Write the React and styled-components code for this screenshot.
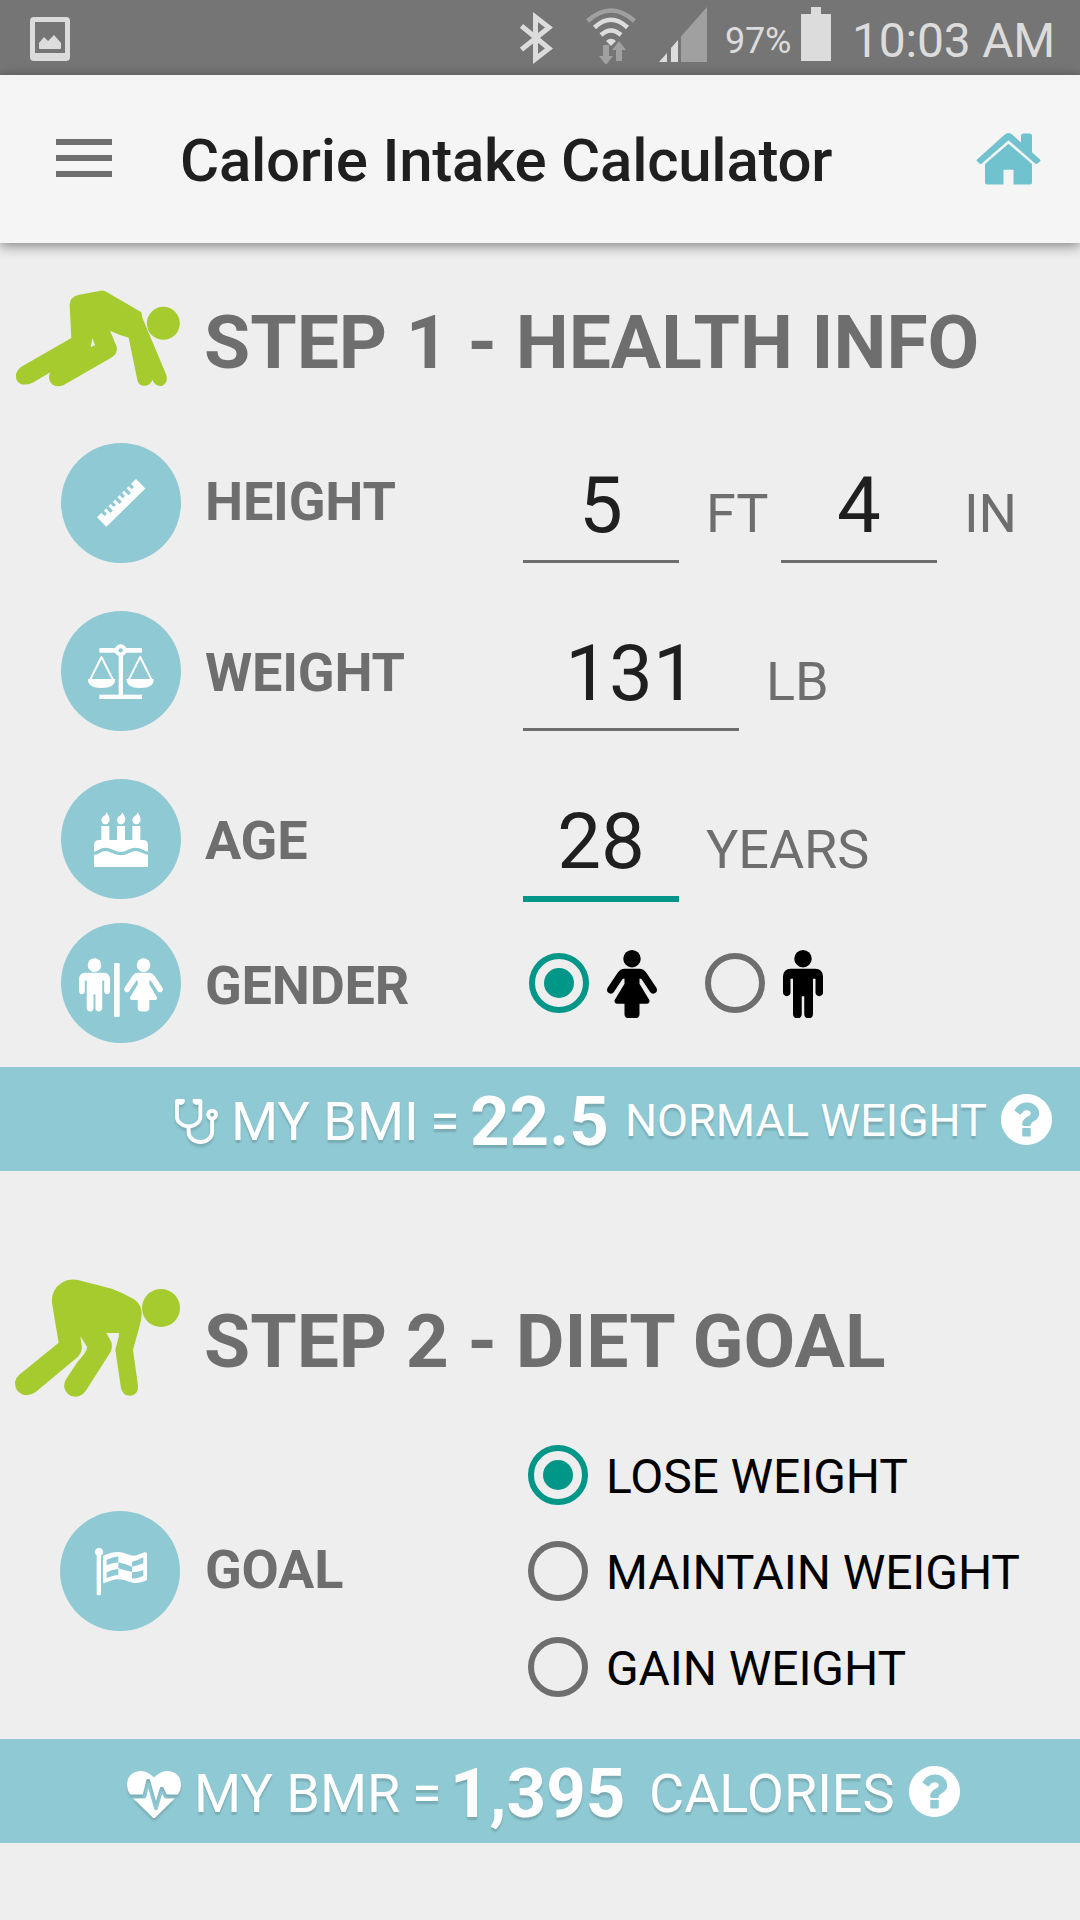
import React, { useState } from "react";
import styled, { createGlobalStyle } from "styled-components";

const c = {
  bg: "#eeeeee",
  band: "#8fcad4",
  teal: "#009688",
  gray: "#6e6e6e",
  lime: "#a5cb2e",
  ink: "#1f1f1f",
  status: "#dcdcdc",
  dim: "#a0a0a0",
};

const GlobalStyle = createGlobalStyle`
  * { box-sizing: border-box; }
  body { margin: 0; background: ${c.bg}; font-family: Roboto, "Liberation Sans", sans-serif; }
  svg { display: block; flex: none; }
`;

const Screen = styled.div`
  width: 1080px;
  height: 1920px;
  overflow: hidden;
  background: ${c.bg};
  display: flex;
  flex-direction: column;
`;

const StatusBar = styled.header`
  height: 75px;
  flex: none;
  padding: 0 20px 0 30px;
  background: #757575;
  color: ${c.status};
  display: grid;
  grid-template-columns: 490px 66px 73px 66px 76px 51px 1fr;
  align-items: start;
  line-height: 75px;
  white-space: nowrap;
`;

const StatusIcon = styled.div`
  padding-top: ${(p) => p.$top}px;
`;

const Percent = styled.div`
  font-size: 36px;
  padding-top: 4px;
  letter-spacing: -0.2px;
`;

const Clock = styled.div`
  font-size: 48px;
  padding-top: 3px;
  letter-spacing: -0.2px;
`;

const Toolbar = styled.div`
  height: 168px;
  flex: none;
  padding: 0 39px 0 56px;
  background: #f5f5f5;
  box-shadow: 0 3px 12px rgba(0, 0, 0, 0.45);
  display: flex;
  align-items: center;
`;

const MenuButton = styled.div`
  width: 56px;
  height: 38px;
  margin-bottom: 2px;
  display: flex;
  flex-direction: column;
  justify-content: space-between;
`;

const MenuLine = styled.span`
  height: 6px;
  background: ${c.gray};
`;

const Title = styled.h1`
  flex: 1;
  margin: 0 0 0 68px;
  padding-top: 3px;
  font-size: 60px;
  font-weight: 500;
  line-height: 72px;
  letter-spacing: -0.25px;
  color: ${c.ink};
  white-space: nowrap;
`;

const StepHead = styled.div`
  height: ${(p) => p.$height}px;
  padding-top: ${(p) => p.$top || 0}px;
  flex: none;
  display: grid;
  grid-template-columns: 204px 1fr;
  align-items: center;
`;

const Figure = styled.div`
  padding-bottom: 9px;
`;

const StepTitle = styled.h2`
  margin: 0;
  padding-bottom: 2px;
  font-size: 75px;
  font-weight: 700;
  line-height: 90px;
  color: ${c.gray};
  white-space: nowrap;
`;

const Row = styled.div`
  height: ${(p) => p.$height || 120}px;
  margin-bottom: ${(p) => p.$gap}px;
  padding-left: ${(p) => p.$left || 61}px;
  flex: none;
  display: grid;
  grid-template-columns: ${(p) => 205 - (p.$left || 61)}px 318px 1fr;
  align-items: center;
`;

const Badge = styled.div`
  width: 120px;
  height: 120px;
  border-radius: 50%;
  background: ${c.band};
`;

const Label = styled.div`
  font-size: 54px;
  font-weight: 700;
  line-height: 64px;
  letter-spacing: -0.2px;
  padding-top: ${(p) => p.$drop || 0}px;
  padding-bottom: ${(p) => p.$lift || 0}px;
  color: ${c.gray};
`;

const Fields = styled.div`
  height: 120px;
  display: flex;
  align-items: flex-start;
`;

const Value = styled.div`
  width: ${(p) => p.$width}px;
  flex: none;
  padding-top: 9px;
  font-size: 78px;
  line-height: 108px;
  text-align: center;
  color: ${c.ink};
  border-bottom: ${(p) => (p.$active ? `6px solid ${c.teal}` : `3px solid ${c.gray}`)};
`;

const Unit = styled.div`
  width: ${(p) => p.$width || "auto"};
  padding: 21px 0 0 27px;
  font-size: 54px;
  line-height: 99px;
  letter-spacing: -0.1px;
  color: ${c.gray};
  white-space: nowrap;
`;

const Radio = styled.div`
  width: 60px;
  height: 60px;
  flex: none;
  border-radius: 50%;
  border: 6px solid ${(p) => (p.$on ? c.teal : c.gray)};
  display: flex;
  align-items: center;
  justify-content: center;
  &::after {
    content: "";
    width: 30px;
    height: 30px;
    border-radius: 50%;
    background: ${(p) => (p.$on ? c.teal : "transparent")};
  }
`;

const GenderGroup = styled.div`
  padding-left: 6px;
  display: flex;
`;

const GenderOption = styled.div`
  width: 176px;
  display: flex;
  align-items: center;
  gap: 18px;
`;

const GoalGroup = styled.div`
  padding-left: 5px;
`;

const GoalOption = styled.div`
  height: 96px;
  display: flex;
  align-items: center;
  gap: 18px;
  font-size: 48px;
  line-height: 56px;
  letter-spacing: -0.1px;
  color: #000;
  white-space: nowrap;
`;

const GoalText = styled.span`
  padding-top: 4px;
`;

const Band = styled.div`
  height: 104px;
  flex: none;
  padding-left: ${(p) => p.$left}px;
  background: ${c.band};
  color: #fff;
  display: grid;
  grid-template-columns: ${(p) => p.$columns};
  align-items: center;
  white-space: nowrap;
  line-height: 96px;
  text-shadow: 0 3px 2px rgba(0, 0, 0, 0.16);
`;

const BandText = styled.span`
  font-size: ${(p) => p.$size}px;
  font-weight: ${(p) => (p.$bold ? 700 : 400)};
  padding-top: ${(p) => p.$drop}px;
`;

const BandIcon = styled.span`
  padding-top: ${(p) => p.$drop || 0}px;
  filter: ${(p) => (p.$flat ? "none" : "drop-shadow(0 3px 1px rgba(0, 0, 0, 0.14))")};
`;

const malePath =
  "M1024 832v416q0 40-28 68t-68 28-68-28-28-68v-352h-64v912q0 46-33 79t-79 33-79-33-33-79v-464h-64v464q0 46-33 79t-79 33-79-33-33-79v-912h-64v352q0 40-28 68t-68 28-68-28-28-68v-416q0-80 56-136t136-56h640q80 0 136 56t56 136z";
const femalePath =
  "M1280 1120q0 40-28 68t-68 28q-51 0-80-43l-227-341h-45v132l247 411q9 15 9 33 0 26-19 45t-45 19h-192v272q0 46-33 79t-79 33h-160q-46 0-79-33t-33-79v-272h-192q-26 0-45-19t-19-45q0-18 9-33l247-411v-132h-45l-227 341q-29 43-80 43-40 0-68-28t-28-68q0-29 16-53l256-384q73-107 176-107h384q103 0 176 107l256 384q16 24 16 53z";

const Male = (props) => (
  <g {...props}>
    <path d={malePath} />
    <circle cx="512" cy="384" r="224" />
  </g>
);
const Female = (props) => (
  <g {...props}>
    <path d={femalePath} />
    <circle cx="640" cy="320" r="224" />
  </g>
);

const FemaleIcon = () => (
  <svg width="50" height="69" viewBox="0 76 1280 1760">
    <Female />
  </svg>
);
const MaleIcon = () => (
  <svg width="40" height="69" viewBox="0 140 1024 1760">
    <Male />
  </svg>
);

const PictureIcon = () => (
  <svg width="40" height="44" viewBox="0 0 40 44" fill={c.status}>
    <path fillRule="evenodd" d="M4 0h32q4 0 4 4v36q0 4-4 4H4q-4 0-4-4V4q0-4 4-4zM5 5v31h30V5z" />
    <path d="M9 26l5-6 4 4 6-6 7 8v5q0 1-1 1H10q-1 0-1-1z" />
  </svg>
);
const BluetoothIcon = () => (
  <svg width="33" height="54" viewBox="0 0 33 54" fill="none" stroke={c.status} strokeWidth="5">
    <path d="M1.500 15L29 37.500L15.500 48V6L29 16.500L1.500 38.500" />
  </svg>
);
const WifiIcon = () => (
  <svg width="50" height="60" viewBox="0 0 50 60" fill="none" stroke={c.status} strokeWidth="4.500">
    <path stroke={c.dim} d="M1.500 17Q25 -4 48.500 17" />
    <path d="M8.500 23.500Q25 8 41.500 23.500" />
    <path d="M15 31Q25 22 35 31" />
    <path stroke="none" fill={c.status} d="M20 37q5-4.500 10 0l-5 5z" />
    <path
      stroke="none"
      fill={c.dim}
      d="M17 43h6v11h4l-7 9-7-9h4zM30 59h6V48h4l-7-9-7 9h4z"
      transform="translate(0 -2)"
    />
  </svg>
);
const SignalIcon = () => (
  <svg width="49" height="55" viewBox="0 0 49 55">
    <path fill={c.status} d="M0 55l8-9v9zM12 41l7-8v22h-7z" />
    <path fill={c.dim} d="M22 29.500L48 0v55H22z" />
  </svg>
);
const BatteryIcon = () => (
  <svg width="30" height="54" viewBox="0 0 30 54" fill={c.status}>
    <path d="M0 7h10V0h10v7h10v47H0z" />
  </svg>
);
const HomeIcon = () => (
  <svg width="65" height="52" viewBox="0 0 65 58" preserveAspectRatio="none" fill="#71c2cf">
    <path d="M1 29.500L28.500 2q4-4 8 0L45 10.500V3q0-2.500 2.500-2.500h6q2.500 0 2.500 2.500v18.500l8 8q1 1 0 2.200l-2.500 2.300q-1.200 1-2.400 0L32.500 8 5.800 34q-1.200 1-2.400 0L1 31.600q-1-1 0-2.100z" />
    <path d="M9 34.500L32.500 12 56 34.500V55.500q0 2-2 2H37.500V41h-10v16.500H11q-2 0-2-2z" />
  </svg>
);

const CrawlingFigure = () => (
  <svg width="180" height="97" viewBox="0 60 540 291" fill={c.lime}>
    <circle cx="490" cy="160" r="49.500" />
    <path
      fillRule="evenodd"
      d="M234 75L302 62q10-2 18 4L424 127L427 143L499 315Q505 337 487 347Q468 352 457 330Q449 350 428 347Q415 344 412 330L386 203Q355 194 330 182L350 230Q354 250 336 262L190 346Q160 356 149 332Q144 318 151 307L98 338Q66 352 51 332Q40 309 64 290L214 204L209 105Q209 82 234 75ZM277 204L272 232L285 226Z"
    />
  </svg>
);
const CrouchingFigure = () => (
  <svg width="180" height="118" viewBox="0 57 540 354" fill={c.lime}>
    <circle cx="483" cy="144" r="57" />
    <path d="M234 60L335 86Q370 98 402 118Q426 134 425 165Q424 180 419 197L399 270L414 377Q416 402 392 407Q368 408 363 385L346 270L356 230L357 219H319L334 246Q338 262 332 275L259 390Q246 410 226 410Q199 408 193 383Q191 369 198 358L262 262L241 229L246 265Q244 280 234 290L108 395Q88 411 66 403Q44 392 45 366Q48 352 58 344L176 248L156 130Q153 90 184 69Q206 55 234 60Z" />
    <path fill={c.bg} d="M260 266L241 287Q230 300 218 311L220 313Q244 299 262 266Z" />
  </svg>
);

const RulerIcon = () => {
  const notches = [19, 38, 57, 76, 95, 114, 133];
  return (
    <svg width="120" height="120" viewBox="183 519 360 360">
      <g transform="translate(291 742) rotate(-44.500)">
        <rect width="164" height="40" fill="#fff" />
        {notches.map((x, i) => (
          <rect key={x} x={x} y="-1" width="10" height={i % 2 ? 20 : 14} fill={c.band} />
        ))}
      </g>
    </svg>
  );
};
const ScalesIcon = () => (
  <svg width="120" height="120" viewBox="63 63 360 360" fill="#fff">
    <rect x="178" y="174" width="128" height="14" />
    <rect x="236" y="190" width="13" height="128" />
    <rect x="178" y="314" width="128" height="13" />
    <circle cx="242" cy="181" r="18" />
    <circle cx="242" cy="181" r="6.500" fill={c.band} />
    {[184.5, 300.5].map((x) => (
      <g key={x} transform={`translate(${x} 0)`}>
        <path d="M-35 271L0 201L35 271" fill="none" stroke="#fff" strokeWidth="6" strokeLinejoin="round" />
        <path d="M-41 267H41Q41 294 0 294Q-41 294-41 267Z" />
      </g>
    ))}
  </svg>
);
const CakeIcon = () => (
  <svg width="120" height="120" viewBox="63 567 360 360" fill="#fff">
    {[196, 243, 289].map((x) => (
      <g key={x} transform={`translate(${x} 0)`}>
        <path d="M3 667Q16 683 12 694Q8 703 0 703Q-12 701-12 689Q-11 680-3 677Q4 674 3 667Z" />
        <rect x="-12" y="708" width="24" height="46" />
      </g>
    ))}
    <path d="M162 831V766Q162 750 178 750H308Q324 750 324 766V831Z" />
    <path
      d="M160 790C178 790 178 778 196 778S223 791 243 791S267 778 287 778S308 790 326 790"
      fill="none"
      stroke={c.band}
      strokeWidth="10"
    />
  </svg>
);
const GenderIcon = () => (
  <svg width="120" height="120" viewBox="63 999 360 360" fill="#fff">
    <Male transform="translate(117 1090.500) scale(0.0908)" />
    <rect x="222" y="1119" width="17" height="162" rx="4" />
    <Female transform="translate(252.500 1096.300) scale(0.0908)" />
  </svg>
);
const FlagIcon = () => (
  <svg width="120" height="120" viewBox="180 753 360 360" fill="#fff">
    <circle cx="297" cy="876" r="12" />
    <rect x="290" y="880" width="13" height="126" rx="5" />
    <path d="M309 888Q332 876 355 876Q370 877 383 883Q397 889 410 886L434 877Q441 875 441 882V957Q441 960 437 962Q417 970 402 969Q387 966 375 961Q362 957 348 958Q330 961 315 969Q309 972 309 966Z" />
    <g fill={c.band}>
      <path d="M320 899Q338 891 355 889V907Q338 908 320 916Z" />
      <path d="M396 905Q412 902 430 892V910Q414 917 396 920Z" />
      <path d="M355 907Q376 911 396 920V936Q376 932 355 925Z" />
      <path d="M320 937Q337 928 355 926V944Q338 946 320 954Z" />
      <path d="M396 937Q413 937 430 930V948Q414 956 396 956Z" />
    </g>
  </svg>
);

const StethoscopeIcon = () => (
  <svg width="43" height="47" viewBox="0 0 1408 1536" fill="#fff">
    <path
      transform="translate(-64 -128)"
      d="M1344 640q0-26-19-45t-45-19-45 19-19 45 19 45 45 19 45-19 19-45zm128 0q0 62-35.500 111t-92.500 70v395q0 159-131.500 271.500t-316.500 112.500-316.500-112.500-131.500-271.500v-132q-164-20-274-128t-110-252v-512q0-26 19-45t45-19q6 0 16 2 17-30 47-48t65-18q53 0 90.500 37.500t37.500 90.500-37.500 90.500-90.500 37.500q-33 0-64-18v402q0 106 94 181t226 75 226-75 94-181v-402q-31 18-64 18-53 0-90.500-37.500t-37.500-90.500 37.500-90.500 90.500-37.500q35 0 65 18t47 48q10-2 16-2 26 0 45 19t19 45v512q0 144-110 252t-274 128v132q0 106 94 181t226 75 226-75 94-181v-395q-57-21-92.500-70t-35.500-111q0-80 56-136t136-56 136 56 56 136z"
    />
  </svg>
);
const HeartbeatIcon = () => (
  <svg width="54" height="47" viewBox="0 128 1792 1536" preserveAspectRatio="none" fill="#fff">
    <path d="M1280 1024h305q-5 6-10 10.500t-9 7.500l-3 4-623 600q-18 18-44 18t-44-18l-624-602q-5-2-21-20h369q22 0 39.500-13.500t22.500-34.500l70-281 190 667q6 20 23 33t39 13q21 0 38-13t23-33l146-485 56 112q18 35 57 35zm512-428q0 145-103 300h-369l-111-221q-8-17-25.500-27t-36.500-8q-45 5-56 46l-129 430-196-686q-6-20-23.500-33t-39.500-13-39 13.500-22 34.500l-116 464h-423q-103-155-103-300 0-220 127-344t351-124q62 0 126.500 21.500t120 58 95.500 68.500 76 68q36-36 76-68t95.500-68.500 120-58 126.500-21.500q224 0 351 124t127 344z" />
  </svg>
);
const QuestionIcon = () => (
  <svg width="51" height="51" viewBox="128 128 1536 1536" fill="#fff">
    <path d="M1024 1376v-192q0-14-9-23t-23-9h-192q-14 0-23 9t-9 23v192q0 14 9 23t23 9h192q14 0 23-9t9-23zm256-672q0-88-55.500-163t-138.500-116-170-41q-243 0-371 213-15 24 8 42l132 100q7 6 19 6 16 0 25-12 53-68 86-92 34-24 86-24 48 0 85.500 26t37.500 59q0 38-20 61t-68 45q-63 28-115.500 86.500t-52.500 125.500v36q0 14 9 23t23 9h192q14 0 23-9t9-23q0-19 21.500-49.500t54.500-49.500q32-18 49-28.500t46-35 44.500-48 28-60.500 12.500-81zm384 192q0 209-103 385.500t-279.500 279.500-385.500 103-385.500-103-279.500-279.500-103-385.500 103-385.500 279.500-279.500 385.500-103 385.500 103 279.500 279.500 103 385.500z" />
  </svg>
);

const goals = ["LOSE WEIGHT", "MAINTAIN WEIGHT", "GAIN WEIGHT"];

export default function App() {
  const [gender, setGender] = useState("female");
  const [goal, setGoal] = useState(goals[0]);

  return (
    <Screen>
      <GlobalStyle />
      <StatusBar>
        <StatusIcon $top={17}><PictureIcon /></StatusIcon>
        <StatusIcon $top={11}><BluetoothIcon /></StatusIcon>
        <StatusIcon $top={4}><WifiIcon /></StatusIcon>
        <StatusIcon $top={7}><SignalIcon /></StatusIcon>
        <Percent>97%</Percent>
        <StatusIcon $top={7}><BatteryIcon /></StatusIcon>
        <Clock>10:03 AM</Clock>
      </StatusBar>
      <Toolbar>
        <MenuButton>
          <MenuLine />
          <MenuLine />
          <MenuLine />
        </MenuButton>
        <Title>Calorie Intake Calculator</Title>
        <HomeIcon />
      </Toolbar>

      <StepHead $height={200}>
        <Figure><CrawlingFigure /></Figure>
        <StepTitle>STEP 1 - HEALTH INFO</StepTitle>
      </StepHead>
      <Row $gap={48}>
        <Badge><RulerIcon /></Badge>
        <Label $lift={3}>HEIGHT</Label>
        <Fields>
          <Value $width={156}>5</Value>
          <Unit $width="102px">FT</Unit>
          <Value $width={156}>4</Value>
          <Unit>IN</Unit>
        </Fields>
      </Row>
      <Row $gap={48}>
        <Badge><ScalesIcon /></Badge>
        <Label $drop={3}>WEIGHT</Label>
        <Fields>
          <Value $width={216}>131</Value>
          <Unit>LB</Unit>
        </Fields>
      </Row>
      <Row $gap={24}>
        <Badge><CakeIcon /></Badge>
        <Label $drop={3}>AGE</Label>
        <Fields>
          <Value $width={156} $active>28</Value>
          <Unit>YEARS</Unit>
        </Fields>
      </Row>
      <Row $gap={24}>
        <Badge><GenderIcon /></Badge>
        <Label $drop={5}>GENDER</Label>
        <GenderGroup>
          <GenderOption onClick={() => setGender("female")}>
            <Radio $on={gender === "female"} />
            <FemaleIcon />
          </GenderOption>
          <GenderOption onClick={() => setGender("male")}>
            <Radio $on={gender === "male"} />
            <MaleIcon />
          </GenderOption>
        </GenderGroup>
      </Row>
      <Band $left={175} $columns="56px 199px 40px 155px 376px 1fr">
        <BandIcon $drop={6}><StethoscopeIcon /></BandIcon>
        <BandText $size={54} $drop={5}>MY BMI</BandText>
        <BandText $size={54} $drop={5}>=</BandText>
        <BandText $size={69} $bold $drop={6}>22.5</BandText>
        <BandText $size={45} $drop={3}>NORMAL WEIGHT</BandText>
        <BandIcon $flat><QuestionIcon /></BandIcon>
      </Band>

      <StepHead $height={256} $top={86}>
        <Figure><CrouchingFigure /></Figure>
        <StepTitle>STEP 2 - DIET GOAL</StepTitle>
      </StepHead>
      <Row $height={288} $gap={24} $left={60}>
        <Badge><FlagIcon /></Badge>
        <Label $lift={3}>GOAL</Label>
        <GoalGroup>
          {goals.map((name) => (
            <GoalOption key={name} onClick={() => setGoal(name)}>
              <Radio $on={goal === name} />
              <GoalText>{name}</GoalText>
            </GoalOption>
          ))}
        </GoalGroup>
      </Row>
      <Band $left={127} $columns="67px 218px 38px 199px 260px 1fr">
        <BandIcon $drop={6}><HeartbeatIcon /></BandIcon>
        <BandText $size={54} $drop={5}>MY BMR</BandText>
        <BandText $size={54} $drop={5}>=</BandText>
        <BandText $size={69} $bold $drop={6}>1,395</BandText>
        <BandText $size={54} $drop={5}>CALORIES</BandText>
        <BandIcon $flat><QuestionIcon /></BandIcon>
      </Band>
    </Screen>
  );
}
